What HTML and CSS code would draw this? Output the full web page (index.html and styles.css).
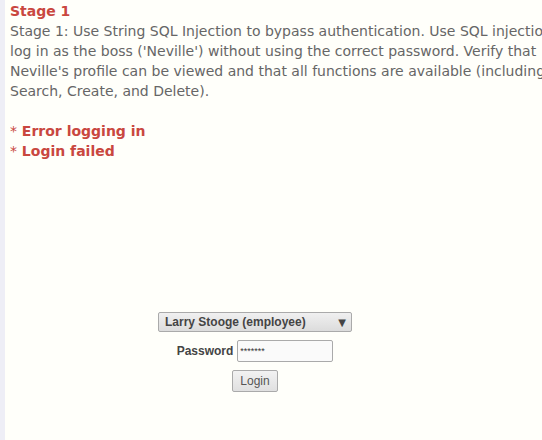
FILE: index.html
```html
<!DOCTYPE html>
<html lang="en">
<head>
    <meta charset="UTF-8">
    <meta name="viewport" content="width=device-width, initial-scale=1.0">
    <title>Stage 1</title>
    <link rel="stylesheet" href="styles.css">
</head>
<body>
    <div class="page">
        <div class="content">
            <!-- Lesson text -->
            <div class="lesson">
                <div class="stage-title">Stage 1</div>
                <div class="stage-text">Stage 1: Use String SQL Injection to bypass authentication. Use SQL injection to log in as the boss ('Neville') without using the correct password. Verify that Neville's profile can be viewed and that all functions are available (including Search, Create, and Delete).</div>
                <br>
                <div class="error"><span class="star">*</span> Error logging in</div>
                <div class="error"><span class="star">*</span> Login failed</div>
            </div>

            <!-- Login form -->
            <form class="login-form">
                <div class="form-row">
                    <div class="select-box">
                        <span>Larry Stooge (employee)</span>
                        <span class="arrow">&#9660;</span>
                    </div>
                </div>
                <div class="form-row">
                    <label for="password">Password</label>
                    <input type="text" id="password" value="*******">
                </div>
                <div class="form-row">
                    <button type="button">Login</button>
                </div>
            </form>
        </div>
    </div>
</body>
</html>
```

FILE: styles.css
```css
/* Page frame */
html, body {
    margin: 0;
    height: 100%;
    overflow: hidden;
}

body {
    font-family: "DejaVu Sans", sans-serif;
    background-color: #eeeef6;
}

.page {
    margin-left: 5px;
    height: 100%;
    background-color: #fffffa;
}

.content {
    width: 490px;
    padding: 1px 0 0 5px;
}

/* Lesson text */
.lesson {
    width: 572px;
    font-size: 14px;
    line-height: 20px;
    color: #666;
}

.stage-title {
    font-weight: bold;
    color: #c9473f;
}

.error {
    font-weight: bold;
    color: #c9473f;
}

.star {
    font-weight: normal;
}

/* Login form */
.login-form {
    margin-top: 151px;
    display: flex;
    flex-direction: column;
    align-items: center;
    gap: 8px;
    font-family: "Liberation Sans", Arial, sans-serif;
    font-size: 12px;
}

.form-row {
    display: flex;
    align-items: center;
    gap: 4px;
}

.select-box {
    width: 186px;
    height: 18px;
    display: flex;
    align-items: center;
    justify-content: space-between;
    padding: 0 0 0 6px;
    border: 1px solid #aaa;
    border-radius: 2px;
    background: linear-gradient(#f0f0f0, #dcdcdc);
    font-weight: bold;
    color: #444;
}

.arrow {
    font-family: "DejaVu Sans", sans-serif;
    font-size: 10px;
    padding-right: 5px;
    color: #444;
}

label {
    font-weight: bold;
    color: #444;
}

input {
    width: 90px;
    height: 20px;
    padding: 0 2px;
    border: 1px solid #aaa;
    border-radius: 2px;
    background-color: #fafafa;
    font-family: "Liberation Sans", Arial, sans-serif;
    font-size: 9px;
    color: #333;
}

button {
    height: 22px;
    padding: 0 7px;
    border: 1px solid #aaa;
    border-radius: 2px;
    background: linear-gradient(#f2f2f2, #e0e0e0);
    font-family: "Liberation Sans", Arial, sans-serif;
    font-size: 12px;
    color: #555;
}
```
